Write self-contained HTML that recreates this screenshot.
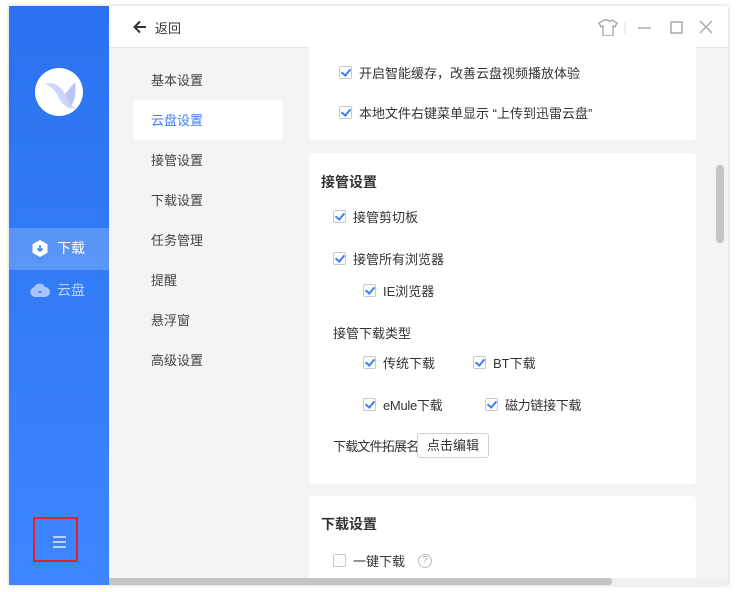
<!DOCTYPE html>
<html><head><meta charset="utf-8"><style>
*{margin:0;padding:0;box-sizing:border-box}
body{width:739px;height:592px;background:#fff;font-family:"Liberation Sans","Noto Sans CJK SC",sans-serif;font-size:13px;color:#333;position:relative;overflow:hidden}
.win{position:absolute;left:9px;top:6px;width:719px;height:579px;background:#f4f4f4;box-shadow:0 0 4px rgba(0,0,0,.2);overflow:hidden}
.side{position:absolute;left:0;top:0;width:100px;height:579px;background:linear-gradient(#2a72ef,#3d86ff)}
.logo{position:absolute;left:26px;top:62px;width:48px;height:48px;border-radius:50%;background:#fff;overflow:hidden}
.nav{position:absolute;left:0;width:100px;height:42px;color:#fff;font-size:14px;line-height:42px}
.title{position:absolute;left:100px;top:0;width:619px;height:42px;background:#fff;border-bottom:1px solid #e6e6e6}
.menu{position:absolute;left:142px;font-size:13px;color:#444}
.card{position:absolute;left:300px;width:387px;background:#fff;border-radius:4px}
.cb{position:absolute;display:flex;align-items:center;font-size:13px;color:#333;white-space:nowrap}
.cb i{display:inline-block;width:13px;height:13px;border:1px solid #c8c8c8;border-radius:2px;margin-right:7px;position:relative;background:#fff}
.cb i.c::after{content:"";position:absolute;left:3px;top:0px;width:4px;height:7px;border:solid #3d7ef5;border-width:0 2px 2px 0;transform:rotate(40deg)}
.h{position:absolute;font-size:14px;font-weight:bold;color:#333}
</style></head><body>
<div class="win">
<div class="side">
 <div class="logo"><svg width="48" height="48"><path d="M10 16 Q22 12 30 26 Q34 36 40 40 Q30 42 24 30 Q20 20 10 16Z" fill="#c9d6f7"/><path d="M30 26 L40 14 Q42 30 36 38Z" fill="#b9c6f5"/></svg></div>
 <div class="nav" style="top:222px;background:rgba(255,255,255,.2)"><svg style="position:absolute;left:23px;top:12px" width="16" height="17"><path d="M8 0L15.5 4.3V12.7L8 17L.5 12.7V4.3Z" fill="#fff"/><path d="M8 5v6M5.5 8.5L8 11l2.5-2.5" stroke="#3d80f5" stroke-width="1.6" fill="none"/></svg><span style="position:absolute;left:48px;top:-1px">下载</span></div>
 <div class="nav" style="top:264px;color:#b9d1ff"><svg style="position:absolute;left:21px;top:13px" width="20" height="14"><path d="M5 14a5 5 0 0 1-1-9.8A6 6 0 0 1 15 4a5 5 0 0 1 0 10Z" fill="#a9c4fb"/><path d="M8 9h4" stroke="#3d80f5" stroke-width="1.5"/></svg><span style="position:absolute;left:48px;top:-1px">云盘</span></div>
 <div style="position:absolute;left:24px;top:511px;width:45px;height:45px;border:2px solid #e2202a"></div>
 <div style="position:absolute;left:44px;top:530px;width:13px;height:2px;background:#bcd2ff;box-shadow:0 5px 0 #bcd2ff,0 10px 0 #bcd2ff"></div>
</div>
<div class="title">
 <svg style="position:absolute;left:24px;top:14px" width="14" height="14"><path d="M13 7H2M7 1.5L1.5 7 7 12.5" stroke="#333" stroke-width="2" fill="none"/></svg>
 <span style="position:absolute;left:46px;top:12px;font-size:13px;color:#333">返回</span>
 <svg style="position:absolute;left:489px;top:12px" width="115" height="20"><path d="M6 2L1 5l2 4 2-1v10h10V8l2 1 2-4-5-3q-2 3-4 0Z" stroke="#aaa" stroke-width="1.4" fill="none"/><path d="M27 4v12" stroke="#ddd"/><path d="M40 10h13" stroke="#aaa" stroke-width="1.5"/><rect x="73" y="4" width="11" height="11" stroke="#aaa" stroke-width="1.5" fill="none"/><path d="M102 3l12 12M114 3L102 15" stroke="#aaa" stroke-width="1.5"/></svg>
</div>
<div style="position:absolute;left:124px;top:94px;width:150px;height:40px;background:#fff;border-radius:4px"></div>
<div class="menu" style="top:64px">基本设置</div>
<div class="menu" style="top:104px;color:#3d7ef5">云盘设置</div>
<div class="menu" style="top:144px">接管设置</div>
<div class="menu" style="top:184px">下载设置</div>
<div class="menu" style="top:224px">任务管理</div>
<div class="menu" style="top:264px">提醒</div>
<div class="menu" style="top:304px">悬浮窗</div>
<div class="menu" style="top:344px">高级设置</div>

<div class="card" style="top:30px;height:104px"></div>
<div class="cb" style="left:330px;top:57px"><i class="c"></i>开启智能缓存，改善云盘视频播放体验</div>
<div class="cb" style="left:330px;top:97px"><i class="c"></i>本地文件右键菜单显示 “上传到迅雷云盘”</div>

<div class="card" style="top:147px;height:331px"></div>
<div class="h" style="left:312px;top:166px">接管设置</div>
<div class="cb" style="left:324px;top:201px"><i class="c"></i>接管剪切板</div>
<div class="cb" style="left:324px;top:243px"><i class="c"></i>接管所有浏览器</div>
<div class="cb" style="left:354px;top:275px"><i class="c"></i>IE浏览器</div>
<div class="cb" style="left:324px;top:317px">接管下载类型</div>
<div class="cb" style="left:354px;top:347px"><i class="c"></i>传统下载</div>
<div class="cb" style="left:464px;top:347px"><i class="c"></i>BT下载</div>
<div class="cb" style="left:354px;top:389px;letter-spacing:-0.3px"><i class="c"></i>eMule下载</div>
<div class="cb" style="left:476px;top:389px;letter-spacing:-0.3px"><i class="c"></i>磁力链接下载</div>
<div class="cb" style="left:324px;top:430px;letter-spacing:-0.8px">下载文件拓展名</div>
<div style="position:absolute;left:408px;top:427px;width:72px;height:25px;border:1px solid #d0d0d0;border-radius:3px;font-size:13px;line-height:23px;text-align:center;color:#333;background:#fff">点击编辑</div>

<div class="card" style="top:490px;height:100px"></div>
<div class="h" style="left:312px;top:508px">下载设置</div>
<div class="cb" style="left:324px;top:545px"><i></i>一键下载<span style="display:inline-block;width:14px;height:14px;border:1px solid #bbb;border-radius:50%;font-size:10px;line-height:12px;text-align:center;color:#aaa;margin-left:13px">?</span></div>

<div style="position:absolute;left:707px;top:159px;width:8px;height:78px;background:#c4c4c4;border-radius:4px"></div>
<div style="position:absolute;left:100px;top:572px;width:619px;height:7px;background:#f0f0f0"></div>
<div style="position:absolute;left:100px;top:572px;width:503px;height:7px;background:#c4c4c4;border-radius:0 3px 3px 0"></div>
</div>
</body></html>
